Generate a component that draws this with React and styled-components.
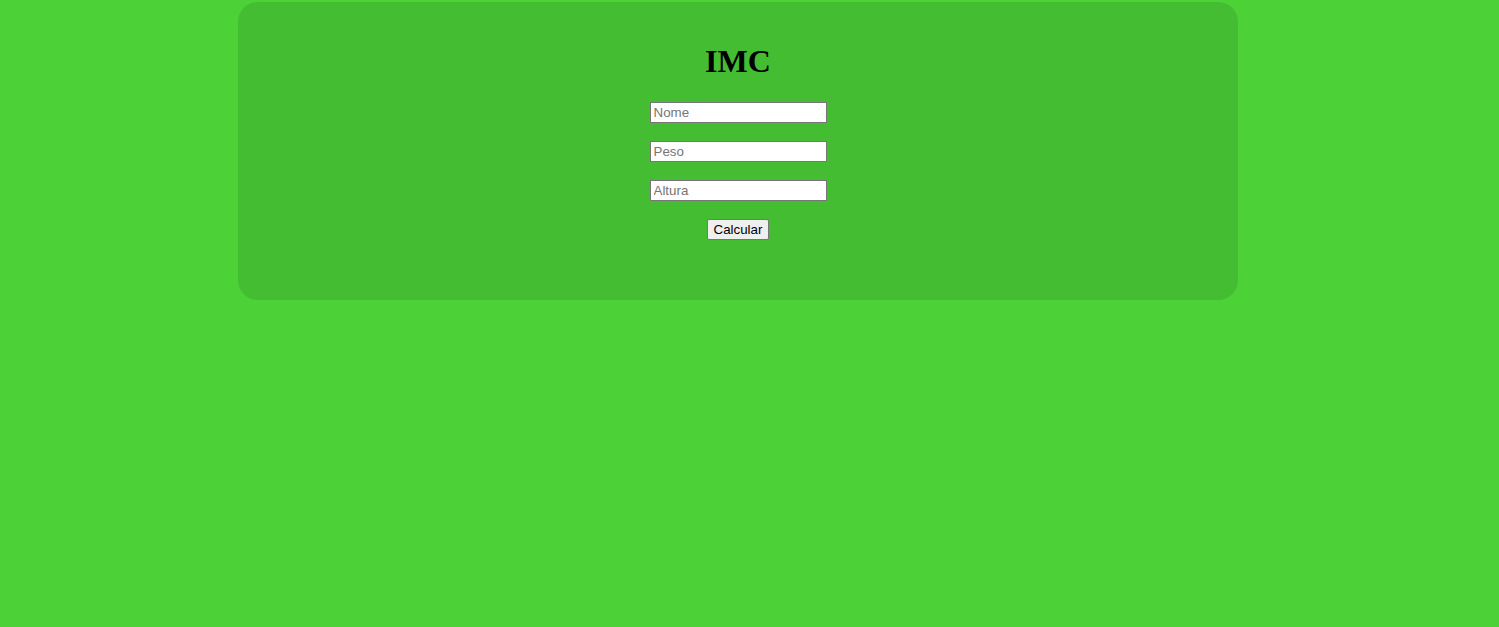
import React from "react";
import styled, { createGlobalStyle } from "styled-components";

const GlobalStyle = createGlobalStyle`
  html, body {
    margin: 0;
    padding: 0;
    background: #4cd137;
    font-family: "Liberation Serif", "Times New Roman", serif;
  }
`;

const Page = styled.div`
  min-height: 627px;
  padding-top: 2px;
  box-sizing: border-box;
`;

const Card = styled.div`
  width: 1000px;
  margin-left: 238px;
  background: #44bd32;
  border-radius: 20px;
  padding: 41px 0 60px;
  box-sizing: border-box;
  display: flex;
  flex-direction: column;
  align-items: center;
`;

const Title = styled.h1`
  margin: 0 0 22px;
  font-size: 32px;
  line-height: 37px;
  font-weight: bold;
  color: #000;
`;

const Form = styled.form`
  display: flex;
  flex-direction: column;
  align-items: center;
  gap: 18px;
`;

const Field = styled.input`
  width: 177px;
  height: 21px;
  box-sizing: border-box;
  padding: 1px 3px;
  border: 1px solid #767676;
  border-radius: 0;
  background: #fff;
  font-family: "Liberation Sans", Arial, sans-serif;
  font-size: 13.33px;
  color: #000;
  outline: none;

  &::placeholder {
    color: #757575;
  }
`;

const Button = styled.button`
  height: 21px;
  padding: 0 6px;
  border: 1px solid #767676;
  border-radius: 2px;
  background: #efefef;
  font-family: "Liberation Sans", Arial, sans-serif;
  font-size: 13.33px;
  line-height: 17px;
  color: #000;
`;

export default function App() {
  return (
    <>
      <GlobalStyle />
      <Page>
        <Card>
          <Title>IMC</Title>
          <Form onSubmit={(e) => e.preventDefault()}>
            <Field type="text" placeholder="Nome" />
            <Field type="text" placeholder="Peso" />
            <Field type="text" placeholder="Altura" />
            <Button type="submit">Calcular</Button>
          </Form>
        </Card>
      </Page>
    </>
  );
}
